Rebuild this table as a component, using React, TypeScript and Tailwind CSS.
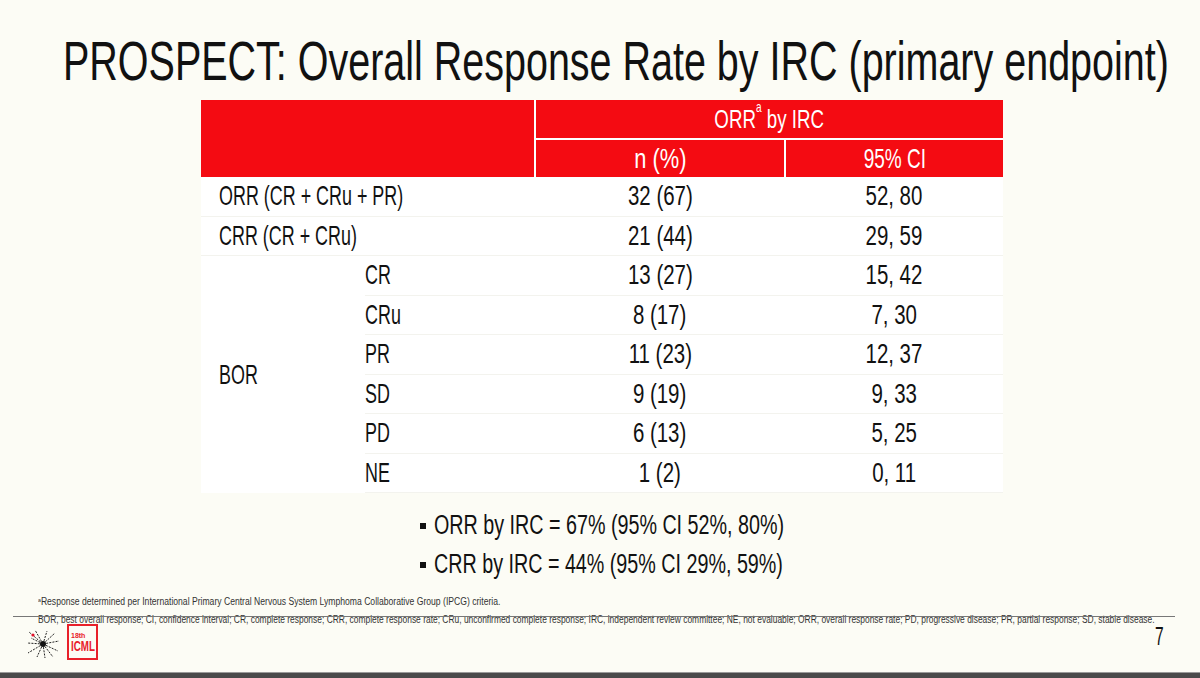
import React from "react";

const F = { fontFamily: '"Liberation Sans", Arial, sans-serif' };

function L({ children, cls }: { children: React.ReactNode; cls: string }) {
  return <span className={"inline-block whitespace-nowrap " + cls}>{children}</span>;
}

const rows: { label: string; sub?: string; n: string; ci: string }[] = [
  { label: "ORR (CR + CRu + PR)", n: "32 (67)", ci: "52, 80" },
  { label: "CRR (CR + CRu)", n: "21 (44)", ci: "29, 59" },
  { label: "", sub: "CR", n: "13 (27)", ci: "15, 42" },
  { label: "", sub: "CRu", n: "8 (17)", ci: "7, 30" },
  { label: "", sub: "PR", n: "11 (23)", ci: "12, 37" },
  { label: "", sub: "SD", n: "9 (19)", ci: "9, 33" },
  { label: "", sub: "PD", n: "6 (13)", ci: "5, 25" },
  { label: "", sub: "NE", n: "1 (2)", ci: "0, 11" },
];

function Logo() {
  const lines: [number, number, number, number][] = [
    [18, 15, 4, 3], [18, 15, 10, 1], [18, 15, 22, 2], [18, 15, 30, 4], [18, 15, 34, 12],
    [18, 15, 33, 22], [18, 15, 28, 28], [18, 15, 20, 29], [18, 15, 12, 28], [18, 15, 3, 24],
    [18, 15, 2, 14], [18, 15, 6, 9],
  ];
  return (
    <svg width="38" height="32" viewBox="0 0 38 32">
      {lines.map((l, i) => (
        <line key={i} x1={l[0]} y1={l[1]} x2={l[2]} y2={l[3]} stroke="#222" strokeWidth="1" strokeDasharray="2 1.2" />
      ))}
      <circle cx="18" cy="15" r="3" fill="#111" />
      <circle cx="8" cy="6" r="1.6" fill="#e0102a" />
    </svg>
  );
}

export default function App() {
  return (
    <div className="relative w-[1200px] h-[678px] overflow-hidden bg-[#fcfcf5] text-[#111]" style={F}>
      {/* Title */}
      <div className="h-[100px] pt-[33px] pl-[63px]">
        <L cls="origin-left scale-x-[0.705] text-[56px] leading-[56px]">
          PROSPECT: Overall Response Rate by IRC (primary endpoint)
        </L>
      </div>

      {/* Table */}
      <div className="ml-[201px] w-[802px]">
        <div className="grid grid-cols-[333px_248px_217px] grid-rows-[38px_37px] gap-[2px] bg-white">
          <div className="row-span-2 bg-[#f40b12]" />
          <div className="col-span-2 bg-[#f40b12] text-white flex items-center justify-center">
            <L cls="scale-x-[0.72] text-[26px] leading-none">
              ORR<sup className="text-[14px] align-[9px]">a</sup> by IRC
            </L>
          </div>
          <div className="bg-[#f40b12] text-white flex items-center justify-center">
            <L cls="scale-x-[0.78] text-[28px] leading-none">n (%)</L>
          </div>
          <div className="bg-[#f40b12] text-white flex items-center justify-center">
            <L cls="scale-x-[0.68] text-[28px] leading-none">95% CI</L>
          </div>
        </div>
        <div className="grid grid-cols-[164px_170px_250px_218px] auto-rows-[39.5px] bg-white text-[28px] leading-none">
          {rows.map((r, i) => (
            <React.Fragment key={i}>
              {r.label ? (
                <div className="col-span-2 flex items-center pl-[18px] border-b border-[#f3f3ee]">
                  <L cls="origin-left scale-x-[0.64]">{r.label}</L>
                </div>
              ) : (
                <>
                  {i === 2 && (
                    <div className="row-span-6 flex items-center pl-[18px]">
                      <L cls="origin-left scale-x-[0.64]">BOR</L>
                    </div>
                  )}
                  <div className="flex items-center border-b border-[#f3f3ee]">
                    <L cls="origin-left scale-x-[0.64]">{r.sub}</L>
                  </div>
                </>
              )}
              <div className="flex items-center justify-center border-b border-[#f3f3ee]">
                <L cls="scale-x-[0.73]">{r.n}</L>
              </div>
              <div className="flex items-center justify-center border-b border-[#f3f3ee]">
                <L cls="scale-x-[0.73]">{r.ci}</L>
              </div>
            </React.Fragment>
          ))}
        </div>
      </div>

      {/* Bullets */}
      <div className="mt-[13px] pl-[420px] text-[27px] leading-[39px]">
        {["ORR by IRC = 67% (95% CI 52%, 80%)", "CRR by IRC = 44% (95% CI 29%, 59%)"].map((t) => (
          <div key={t} className="flex items-center">
            <span className="w-[6px] h-[6px] bg-[#111] mr-[8px]" />
            <L cls="origin-left scale-x-[0.73]">{t}</L>
          </div>
        ))}
      </div>

      {/* Footnotes */}
      <div className="relative mt-[9px] pl-[38px] text-[10px] leading-[18px] text-[#333]">
        <div>
          <L cls="origin-left scale-x-[0.86]">
            <sup className="text-[6px]">a</sup>Response determined per International Primary Central Nervous System Lymphoma Collaborative Group (IPCG) criteria.
          </L>
        </div>
        <div>
          <L cls="origin-left scale-x-[0.843]">
            BOR, best overall response; CI, confidence interval; CR, complete response; CRR, complete response rate; CRu, unconfirmed complete response; IRC, independent review committee; NE, not evaluable; ORR, overall response rate; PD, progressive disease; PR, partial response; SD, stable disease.
          </L>
        </div>
        <div className="absolute left-[13px] right-[25px] top-[23px] h-px bg-[#777]" />
      </div>

      {/* Logo + page number */}
      <div className="flex items-start justify-between pl-[25px] pr-[34px] mt-[-9px]">
        <div className="flex items-start gap-[4px] mt-[4px]">
          <div className="mt-[5px]"><Logo /></div>
          <div className="w-[31px] h-[36px] border-2 border-[#e8202a] flex flex-col items-start justify-center pl-[2px] text-[#e8202a] leading-none overflow-hidden">
            <span className="text-[7px] font-bold">18th</span>
            <L cls="origin-left scale-x-[0.7] text-[14px] font-bold">ICML</L>
          </div>
        </div>
        <L cls="scale-x-[0.6] text-[26px] leading-none mt-[3px]">7</L>
      </div>

      {/* Bottom bar */}
      <div className="absolute left-0 right-0 bottom-0 h-[6px] bg-[#4a4a4a] border-t border-[#9a9a9a]" />
    </div>
  );
}
